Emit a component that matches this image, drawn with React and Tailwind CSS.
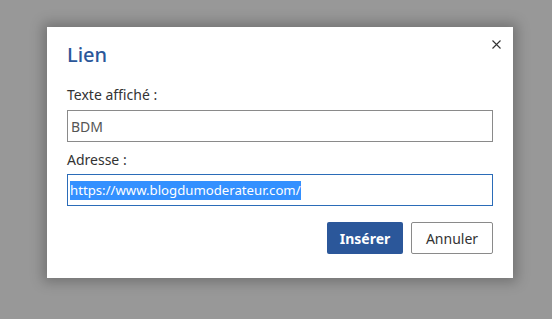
export default function App() {
  const font = { fontFamily: '"Segoe UI", "Noto Sans", "Open Sans", sans-serif' };
  return (
    <div className="w-[552px] h-[319px] bg-[#989898] pl-[47px] pt-[27px] overflow-hidden" style={font}>
      <div className="relative w-[466px] h-[251px] bg-white shadow-[0_0_12px_4px_rgba(0,0,0,0.25)] px-[20px] pt-[14px] flex flex-col">
        <button className="absolute right-[11px] top-[11px] w-[12px] h-[12px] flex items-center justify-center text-[#333]">
          <svg width="9" height="9" viewBox="0 0 9 9" fill="none" stroke="#333" strokeWidth="1.1">
            <path d="M0.5 0.5 L8.5 8.5 M8.5 0.5 L0.5 8.5" />
          </svg>
        </button>
        <div className="text-[20px] leading-[28px] text-[#2b579a] font-medium">Lien</div>
        <div className="mt-[16px] text-[14px] leading-[20px] text-[#333]">Texte affiché :</div>
        <div className="mt-[5px] h-[32px] border border-[#8a8a8a] flex items-center px-[3px] text-[14px] text-[#555]">BDM</div>
        <div className="mt-[8px] text-[14px] leading-[20px] text-[#333]">Adresse :</div>
        <div className="mt-[4px] h-[32px] border border-[#2b6cb8] flex items-center px-[2px] text-[13.2px]">
          <span className="bg-[#3390ff] text-white leading-[19px]">https://www.blogdumoderateur.com/</span>
        </div>
        <div className="mt-[16px] flex justify-end gap-[8px]">
          <button className="w-[76px] h-[32px] bg-[#2b579a] rounded-[2px] text-white font-bold text-[14px]">Insérer</button>
          <button className="w-[82px] h-[32px] bg-white border border-[#8a8a8a] rounded-[2px] text-[#333] text-[14px]">Annuler</button>
        </div>
      </div>
    </div>
  );
}
